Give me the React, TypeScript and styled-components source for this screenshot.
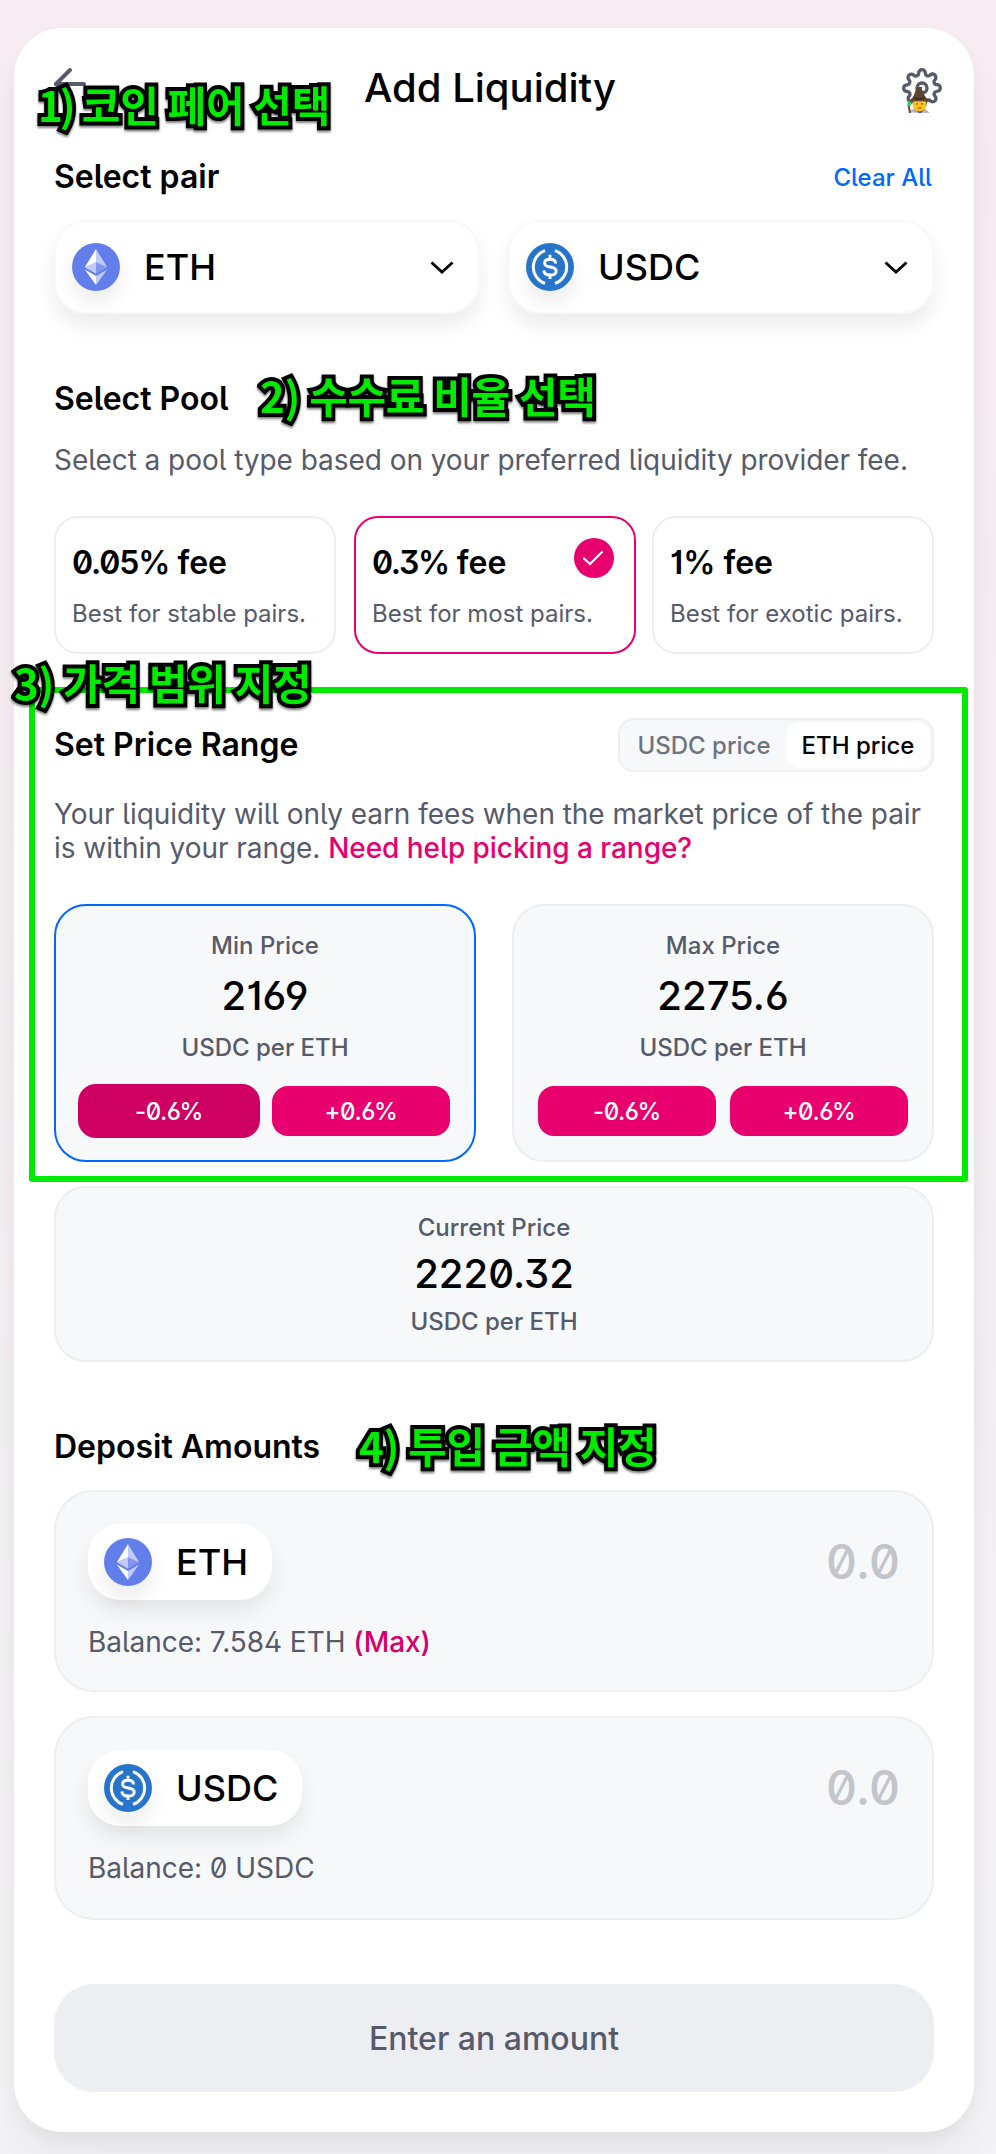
import React from 'react';
import styled, { createGlobalStyle, css } from 'styled-components';
import { FiArrowLeft, FiSettings } from 'react-icons/fi';

const c = {
  text: '#000000',
  muted: '#565a69',
  faint: '#c3c5cb',
  panel: '#f7f8fa',
  line: '#edeef2',
  pink: '#e8006f',
  pinkDark: '#ce0062',
  blue: '#0068fc',
  mark: '#00eb00',
};

const GlobalStyle = createGlobalStyle`
  * { box-sizing: border-box; }
  body {
    margin: 0;
    font-family: Inter, "Liberation Sans", sans-serif;
    font-optical-sizing: none;
    font-variation-settings: 'opsz' 14;
    font-feature-settings: 'ss01' on, 'ss02' on, 'cv01' on, 'cv03' on;
    color: ${c.text};
  }
  button { font: inherit; font-feature-settings: inherit; font-variation-settings: inherit; border: 0; padding: 0; }
`;

const Page = styled.div`
  position: relative;
  width: 996px;
  height: 2154px;
  padding: 28px 22px 22px 14px;
  overflow: hidden;
  background: linear-gradient(180deg, #f8ecf3 0%, #f6eef3 35%, #f4f1f4 65%, #f4f4f6 100%);
`;

const Card = styled.main`
  height: 2104px;
  padding: 36px 40px 40px;
  border-radius: 48px;
  background: #fff;
  box-shadow: 0 0 2px rgba(0, 0, 0, 0.01), 0 8px 16px rgba(0, 0, 0, 0.04),
    0 32px 48px rgba(0, 0, 0, 0.04), 0 48px 64px rgba(0, 0, 0, 0.01);
`;

const Header = styled.header`
  display: flex;
  justify-content: space-between;
  align-items: center;
  height: 48px;
  margin-right: -8px;
`;

const Title = styled.h1`
  margin: 0;
  font-size: 40px;
  line-height: 48px;
  font-weight: 500;
`;

const BackSlot = styled.div`
  width: 24px;
  height: 48px;
  color: ${c.muted};
  svg { display: block; margin: -4px 0 0 -8px; }
`;

const GearSlot = styled.div`
  position: relative;
  width: 40px;
  height: 40px;
  color: ${c.muted};
  svg { display: block; }
`;

const MageBadge = styled.svg`
  position: absolute;
  left: 4px;
  top: 18px;
`;

const SectionRow = styled.div<{ $top: number }>`
  display: flex;
  justify-content: space-between;
  align-items: center;
  margin-top: ${(p) => p.$top}px;
`;

const Heading = styled.h2`
  margin: 0;
  font-size: 32px;
  line-height: 40px;
  font-weight: 600;
`;

const Rate = styled.span<{ $tight: number }>`
  letter-spacing: ${(p) => p.$tight}px;
`;

const ClearAll = styled.a`
  padding: 2px 2px 0 0;
  font-size: 24px;
  line-height: 30px;
  font-weight: 500;
  color: ${c.blue};
`;

const Pair = styled.div`
  display: flex;
  gap: 28px;
  margin-top: 23px;
`;

const Select = styled.button`
  display: flex;
  align-items: center;
  width: 426px;
  height: 94px;
  padding: 0 24px 0 16px;
  border: 2px solid ${c.panel};
  border-radius: 32px;
  background: #fff;
  box-shadow: 0 12px 20px rgba(0, 0, 0, 0.075);
  color: #000;
  > svg { margin-left: auto; }
`;

const TokenIcon = styled.span`
  width: 48px;
  height: 48px;
  border-radius: 50%;
  box-shadow: 0 12px 20px rgba(0, 0, 0, 0.075);
  svg { display: block; }
`;

const TokenName = styled.span`
  margin-left: 24px;
  font-size: 36px;
  line-height: 44px;
  font-weight: 500;
`;

const Body = styled.p<{ $top: number }>`
  margin: ${(p) => p.$top}px 0 0;
  font-size: 28px;
  line-height: 34px;
  font-weight: 400;
  letter-spacing: -0.05px;
  color: ${c.muted};
  white-space: nowrap;
`;

const PinkLink = styled.a<{ $dark?: boolean }>`
  font-weight: 500;
  color: ${(p) => (p.$dark ? '#d5006a' : c.pink)};
`;

const Fees = styled.div`
  display: flex;
  gap: 16px;
  margin-top: 39px;
`;

const FeeCard = styled.div<{ $on?: boolean }>`
  position: relative;
  width: 282px;
  height: 138px;
  padding: 25px 16px 23px;
  border: 2px solid ${(p) => (p.$on ? c.pink : c.line)};
  border-radius: 24px;
  ${(p) => p.$on && css`margin-left: 2px;`}
`;

const FeeNote = styled.div`
  margin-top: 16px;
  font-size: 24px;
  line-height: 30px;
  color: ${c.muted};
  white-space: nowrap;
`;

const CheckBadge = styled.span`
  position: absolute;
  top: 20px;
  right: 20px;
  width: 40px;
  height: 40px;
  border-radius: 50%;
  background: ${c.pink};
  svg { display: block; }
`;

const Toggle = styled.div`
  display: flex;
  height: 54px;
  padding: 2px;
  border: 2px solid ${c.line};
  border-radius: 16px;
  background: ${c.panel};
`;

const Tab = styled.button<{ $on?: boolean; $w: number }>`
  width: ${(p) => p.$w}px;
  height: 46px;
  border-radius: 14px;
  background: ${(p) => (p.$on ? '#fff' : 'transparent')};
  color: ${(p) => (p.$on ? '#000' : '#6f7380')};
  font-size: 24px;
  font-weight: 500;
  white-space: nowrap;
`;

const Ranges = styled.div`
  display: flex;
  gap: 36px;
  margin-top: 39px;
`;

const panel = css`
  border: 2px solid ${c.line};
  background: ${c.panel};
`;

const PriceCard = styled.section<{ $focus?: boolean; $wide?: boolean }>`
  ${panel}
  display: flex;
  flex-direction: column;
  align-items: center;
  gap: ${(p) => (p.$wide ? 8 : 12)}px;
  width: ${(p) => (p.$wide ? '880px' : '422px')};
  height: ${(p) => (p.$wide ? 176 : 258)}px;
  margin-top: ${(p) => (p.$wide ? 24 : 0)}px;
  padding: 25px 24px 23px;
  border-radius: 32px;
  ${(p) => p.$focus && css`border-color: ${c.blue};`}
`;

const Caption = styled.div`
  font-size: 24px;
  line-height: 30px;
  font-weight: 500;
  color: ${c.muted};
`;

const Price = styled.div`
  margin: -1px 0 1px;
  font-size: 40px;
  line-height: 48px;
  font-weight: 500;
`;

const Steps = styled.div`
  display: flex;
  gap: 14px;
  margin-top: 11px;
`;

const Step = styled.button<{ $hover?: boolean }>`
  width: 178px;
  height: 50px;
  border-radius: 16px;
  background: ${c.pink};
  color: #fff;
  font-size: 24px;
  font-weight: 500;
  letter-spacing: -0.5px;
  ${(p) => p.$hover && css`
    background: ${c.pinkDark};
    box-shadow: 0 0 0 2px ${c.pinkDark};
  `}
`;

const Deposits = styled.div`
  display: flex;
  flex-direction: column;
  gap: 24px;
  margin-top: 23px;
`;

const Deposit = styled.section<{ $h: number }>`
  ${panel}
  height: ${(p) => p.$h}px;
  padding: 32px;
  border-radius: 40px;
`;

const DepositTop = styled.div`
  display: flex;
  justify-content: space-between;
  align-items: center;
  height: 76px;
`;

const TokenPill = styled.div`
  display: flex;
  align-items: center;
  height: 76px;
  padding: 0 24px 0 16px;
  border-radius: 32px;
  background: #fff;
  box-shadow: 0 12px 20px rgba(0, 0, 0, 0.075);
`;

const Amount = styled.div`
  font-size: 48px;
  line-height: 58px;
  font-weight: 450;
  color: ${c.faint};
`;

const Submit = styled.button`
  display: block;
  width: 880px;
  height: 108px;
  margin-top: 64px;
  border-radius: 40px;
  background: ${c.line};
  color: ${c.muted};
  font-size: 32px;
  font-weight: 500;
`;

const Frame = styled.div`
  position: absolute;
  left: 29px;
  top: 687px;
  width: 939px;
  height: 495px;
  border: 6px solid ${c.mark};
  border-radius: 3px;
`;

const Note = styled.div<{ $x: number; $y: number }>`
  position: absolute;
  left: ${(p) => p.$x}px;
  top: ${(p) => p.$y}px;
  font-family: 'Noto Sans CJK KR', sans-serif;
  font-feature-settings: normal;
  font-size: 42px;
  line-height: 60px;
  font-weight: 700;
  letter-spacing: -0.35px;
  color: ${c.mark};
  white-space: nowrap;
  -webkit-text-stroke: 8px #000;
  paint-order: stroke fill;
  stroke-linejoin: round;
  filter: drop-shadow(0 2px 1px rgba(0, 0, 0, 0.5));
`;

const NoteNumber = styled.span<{ $tight?: number }>`
  letter-spacing: ${(p) => p.$tight ?? -0.35}px;
`;

const EthLogo = () => (
  <svg width="48" height="48" viewBox="0 0 48 48">
    <circle cx="24" cy="24" r="24" fill="#627eea" />
    <path d="M24 6v13.2l11.2 5z" fill="#fff" fillOpacity=".6" />
    <path d="M24 6 12.8 24.2l11.2-5z" fill="#fff" />
    <path d="M24 19.2v11.6l11.2-6.6z" fill="#fff" fillOpacity=".2" />
    <path d="m12.8 24.2 11.2 6.6V19.2z" fill="#fff" fillOpacity=".6" />
    <path d="M24 33v9l11.2-15.6z" fill="#fff" fillOpacity=".6" />
    <path d="M24 42v-9l-11.2-6.6z" fill="#fff" />
  </svg>
);

const UsdcLogo = () => (
  <svg width="48" height="48" viewBox="0 0 48 48" fill="none">
    <circle cx="24" cy="24" r="24" fill="#2775ca" />
    <path d="M19 7.7a17.2 17.2 0 0 0 0 32.6M29 7.7a17.2 17.2 0 0 1 0 32.6" stroke="#fff" strokeWidth="2.9" />
    <path d="M24 11.8v4.500M24 31.500v4.500M29.6 20.500c0-2.600-2.200-4.200-5.500-4.200-3.200 0-5.500 1.500-5.500 3.900 0 5.600 11.600 2 11.600 7.700 0 2.600-2.500 4.100-6.100 4.100-3.700 0-6.100-1.600-6.200-4.600" stroke="#fff" strokeWidth="2.9" />
  </svg>
);

const Mage = () => (
  <MageBadge width="26" height="28" viewBox="0 0 26 28">
    <path d="M3 26.500c2-3 5-5 10-5S21 23.500 23.500 27z" fill="#b9b5bd" />
    <path d="M8 23 13 27h2l4-4z" fill="#67417f" />
    <path d="M1.500 18.500h2l1.500 8.500H3z" fill="#6b4428" />
    <path d="M1.500 15.500 4 14l1.200 4.500-3.400 2z" fill="#22d46b" />
    <circle cx="13.500" cy="18.500" r="6.900" fill="#fcc21b" />
    <path d="M11 17.200v1.200M16 17.200v1.200" stroke="#4b3217" strokeWidth="1.400" />
    <path d="M11.800 21.800q1.700.8 3.400 0" stroke="#7a4a16" strokeWidth="1" fill="none" />
    <path d="M2.500 14.500C6 13.500 8 10 9.500 4.500 10.500 1 14 0 16.500 1.500 14.500 3 17 4 17.500 6.500c.8 3.500 3 6.500 7 8-3 1.500-6 .8-11 .8s-8 .7-11-.8z" fill="#5c4630" />
    <path d="M8 11.800q5 2.200 10.500 0" stroke="#3c2b1c" strokeWidth="1.500" fill="none" />
  </MageBadge>
);

const Chevron = () => (
  <svg width="24" height="14" viewBox="0 0 24 14" fill="none">
    <path d="m1.500 2.500 10.500 9.500L22.500 2.500" stroke="#000" strokeWidth="2.800" />
  </svg>
);

const logos = { ETH: EthLogo, USDC: UsdcLogo };
type Ticker = keyof typeof logos;

const Token = ({ symbol }: { symbol: Ticker }) => {
  const Logo = logos[symbol];
  return (
    <>
      <TokenIcon><Logo /></TokenIcon>
      <TokenName>{symbol}</TokenName>
    </>
  );
};

const Range = ({ label, value, focus }: { label: string; value: string; focus?: boolean }) => (
  <PriceCard $focus={focus}>
    <Caption>{label}</Caption>
    <Price>{value}</Price>
    <Caption>USDC per ETH</Caption>
    <Steps>
      <Step $hover={focus}>-0.6%</Step>
      <Step>+0.6%</Step>
    </Steps>
  </PriceCard>
);

const fees = [
  { rate: '0.05%', note: 'Best for stable pairs.', tight: -1.1 },
  { rate: '0.3%', note: 'Best for most pairs.', tight: -1.35, on: true },
  { rate: '1%', note: 'Best for exotic pairs.', tight: 0 },
];

const notes = [
  { x: 38, y: 74, number: '1)', text: ' 코인 페어 선택', tight: -3 },
  { x: 260, y: 365, number: '2)', text: ' 수수료 비율 선택' },
  { x: 14, y: 652, number: '3)', text: ' 가격 범위 지정' },
  { x: 359, y: 1415, number: '4)', text: ' 투입 금액 지정' },
];

export default function App() {
  return (
    <Page>
      <GlobalStyle />
      <Card>
        <Header>
          <BackSlot><FiArrowLeft size={48} /></BackSlot>
          <Title>Add Liquidity</Title>
          <GearSlot><FiSettings size={40} /><Mage /></GearSlot>
        </Header>

        <SectionRow $top={45}>
          <Heading>Select pair</Heading>
          <ClearAll>Clear All</ClearAll>
        </SectionRow>
        <Pair>
          <Select><Token symbol="ETH" /><Chevron /></Select>
          <Select><Token symbol="USDC" /><Chevron /></Select>
        </Pair>

        <SectionRow $top={65}><Heading>Select Pool</Heading></SectionRow>
        <Body $top={24}>Select a pool type based on your preferred liquidity provider fee.</Body>
        <Fees>
          {fees.map((f) => (
            <FeeCard key={f.rate} $on={f.on}>
              <Heading><Rate $tight={f.tight}>{f.rate}</Rate> fee</Heading>
              <FeeNote>{f.note}</FeeNote>
              {f.on && (
                <CheckBadge>
                  <svg width="40" height="40" viewBox="0 0 40 40" fill="none">
                    <path d="m10 20.500 6 5.500L28 14" stroke="#fff" strokeWidth="2.200" strokeLinecap="round" />
                  </svg>
                </CheckBadge>
              )}
            </FeeCard>
          ))}
        </Fees>

        <SectionRow $top={64}>
          <Heading>Set Price Range</Heading>
          <Toggle>
            <Tab $w={164}>USDC price</Tab>
            <Tab $w={144} $on>ETH price</Tab>
          </Toggle>
        </SectionRow>
        <Body $top={25}>
          Your liquidity will only earn fees when the market price of the pair<br />
          is within your range. <PinkLink>Need help picking a range?</PinkLink>
        </Body>
        <Ranges>
          <Range label="Min Price" value="2169" focus />
          <Range label="Max Price" value="2275.6" />
        </Ranges>
        <PriceCard $wide>
          <Caption>Current Price</Caption>
          <Price>2220.32</Price>
          <Caption>USDC per ETH</Caption>
        </PriceCard>

        <SectionRow $top={65}><Heading>Deposit Amounts</Heading></SectionRow>
        <Deposits>
          <Deposit $h={202}>
            <DepositTop>
              <TokenPill><Token symbol="ETH" /></TokenPill>
              <Amount>0.0</Amount>
            </DepositTop>
            <Body $top={25}>Balance: 7.584 ETH <PinkLink $dark>(Max)</PinkLink></Body>
          </Deposit>
          <Deposit $h={204}>
            <DepositTop>
              <TokenPill><Token symbol="USDC" /></TokenPill>
              <Amount>0.0</Amount>
            </DepositTop>
            <Body $top={25}>Balance: 0 USDC</Body>
          </Deposit>
        </Deposits>
        <Submit>Enter an amount</Submit>
      </Card>
      <Frame />
      {notes.map((n) => (
        <Note key={n.number} $x={n.x} $y={n.y}>
          <NoteNumber $tight={n.tight}>{n.number}</NoteNumber>{n.text}
        </Note>
      ))}
    </Page>
  );
}
